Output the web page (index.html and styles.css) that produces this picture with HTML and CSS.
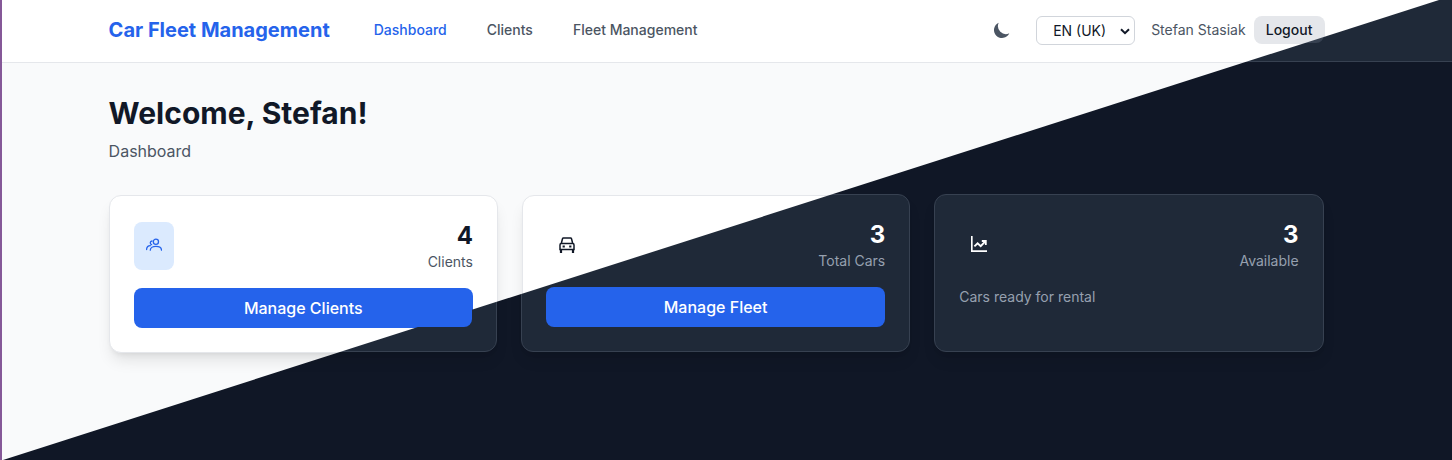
FILE: index.html
```html
<!DOCTYPE html>
<html lang="en">
<head>
<meta charset="utf-8">
<title>Car Fleet Management</title>
<link rel="stylesheet" href="styles.css">
</head>
<body>
<div class="stage">
  <div class="theme light">
    <header class="topbar">
      <div class="container bar">
        <div class="brand">Car Fleet Management</div>
        <nav class="nav">
          <a class="active">Dashboard</a>
          <a>Clients</a>
          <a>Fleet Management</a>
        </nav>
        <div class="tools">
          <svg class="moon" viewBox="0 0 20 20"><path fill="currentColor" d="M17.293 13.293A8 8 0 016.707 2.707a8.001 8.001 0 1010.586 10.586z"/></svg>
          <div class="select"><span>EN (UK)</span><svg class="chevron" viewBox="0 0 10 7"><path d="M1 1.2 5 5.2 9 1.2" fill="none" stroke="currentColor" stroke-width="2"/></svg></div>
          <span class="user">Stefan Stasiak</span>
          <button class="logout">Logout</button>
        </div>
      </div>
    </header>
    <main class="container main">
      <h1>Welcome, Stefan!</h1>
      <p class="subtitle">Dashboard</p>
      <div class="cards">
        <section class="card">
          <div class="row">
            <div class="icon tinted">
              <svg viewBox="0 0 16 16" fill="none" stroke="currentColor" stroke-width="1.3" stroke-linecap="round"><circle cx="9.9" cy="4.8" r="2.6"/><path d="M4.3 13.2c0-5 11.2-5 11.2 0"/><path d="M6 4a1.9 1.9 0 0 0-.4 3.7"/><path d="M.6 12.5c0-2.3 1.4-3.7 3.7-3.9"/></svg>
            </div>
            <div class="stat"><div class="value">4</div><div class="label">Clients</div></div>
          </div>
          <button class="action">Manage Clients</button>
        </section>
        <section class="card">
          <div class="row">
            <div class="icon">
              <svg viewBox="0 0 16 16" fill="none" stroke="currentColor" stroke-width="1.5"><path d="M2.2 6.8 3.5 1.7Q3.7 1 4.4 1h7.2q.7 0 .9.7l1.3 5.1M1 12.4V7.9Q1 6.6 2.2 6.6h11.6Q15 6.6 15 7.9v4.5z"/><path d="M2 12.5V16M14 12.5V16" stroke-width="2.2"/><path d="M3.6 9.5h2.2M10.2 9.5h2.2" stroke-width="2.1"/></svg>
            </div>
          </div>
        </section>
      </div>
    </main>
  </div>

  <div class="theme dark">
    <header class="topbar">
      <div class="container bar">
        <div class="tools"><div class="logout"></div></div>
      </div>
    </header>
    <main class="container main">
      <div class="heading-space"></div>
      <div class="cards">
        <section class="card">
          <div class="row"></div>
          <div class="action"></div>
        </section>
        <section class="card">
          <div class="row end">
            <div class="stat"><div class="value">3</div><div class="label">Total Cars</div></div>
          </div>
          <button class="action">Manage Fleet</button>
        </section>
        <section class="card">
          <div class="row">
            <div class="icon">
              <svg viewBox="0 0 16 16" fill="none" stroke="currentColor" stroke-width="1.7"><path d="M.8 0v15.2H16"/><path d="M3.4 10.4 6.6 7.3l3.1 2.9 4.6-4.8" stroke-width="1.9"/><path d="M10.8 5h4v4" stroke-width="1.8"/></svg>
            </div>
            <div class="stat"><div class="value">3</div><div class="label">Available</div></div>
          </div>
          <p class="note">Cars ready for rental</p>
        </section>
      </div>
    </main>
  </div>
</div>
</body>
</html>
```
FILE: styles.css
```css
* { box-sizing: border-box; margin: 0; }
body { font-family: Inter, "Liberation Sans", sans-serif; font-size: 16px; line-height: 24px; }
button { font: inherit; border: 0; padding: 0; }

.stage { position: relative; width: 1452px; height: 460px; overflow: hidden; background: #855898; }

/* Both themes are stacked and split along the diagonal. */
.theme { position: absolute; inset: 0; }
.light {
  --bar: #fff; --line: #e5e7eb; --text: #111827; --muted: #4b5563; --chip: #e5e7eb;
  background: #f9fafb; color: var(--text);
  left: 2px; padding-left: 106.6px;
}
.dark {
  --bar: #1f2938; --line: #374151; --text: #fff; --muted: #96a0af; --chip: #374151;
  background: #101726; color: var(--text);
  padding-left: 107.6px;
  clip-path: polygon(1439px 0, 1452px 0, 1452px 460px, 3px 460px);
  /* composited as one group so the diagonal edge blends cleanly */
  opacity: .999;
}

.container { width: 1216px; }
.topbar { height: 63px; margin-left: -106.6px; padding-left: 106.6px; background: var(--bar); border-bottom: 1px solid var(--line); }
.dark .topbar { height: 62px; margin-left: -107.6px; padding-left: 107.6px; }
.bar { height: 100%; display: flex; align-items: flex-start; }
.brand { padding-top: 16px; line-height: 28px; font-size: 20px; font-weight: 700; color: #2563eb; }
.nav { display: flex; gap: 40px; margin-left: 44px; padding-top: 20px; font-size: 14px; line-height: 20px; font-weight: 500; color: var(--muted); }
.nav .active { color: #2563eb; }
.tools { display: flex; align-items: center; margin-left: auto; padding-top: 16px; height: 44px; font-size: 14px; line-height: 20px; }
.moon { width: 20px; height: 20px; margin-right: 24px; color: #4b5563; }
.select { display: flex; align-items: center; justify-content: space-between; width: 99px; height: 29px; margin: 1px 16px 0 0; padding: 1px 4px 0 16px; border: 1px solid #d1d5db; border-radius: 6px; background: #fff; color: #111827; }
.chevron { width: 10px; height: 7px; }
.user { color: var(--muted); margin-right: 8px; }
.logout { width: 71px; height: 28px; border-radius: 8px; background: var(--chip); color: #111827; font-weight: 500; }
.dark .logout { margin-top: -2px; }

.main { padding-top: 32px; }
h1 { font-size: 30px; line-height: 36px; font-weight: 700; }
.subtitle { margin: 8px 0 32px; color: var(--muted); }
.heading-space { height: 100px; }

.cards { display: grid; grid-template-columns: repeat(3, 1fr); gap: 24px; }
.card { height: 158px; padding: 24px; background: var(--bar); border: 1px solid var(--line); border-radius: 12px; box-shadow: 0 10px 15px -3px rgba(0, 0, 0, .1), 0 4px 6px -4px rgba(0, 0, 0, .1); }
.row { height: 52px; display: flex; align-items: center; justify-content: space-between; }
.row.end { justify-content: flex-end; }
.icon { width: 40px; height: 48px; padding-bottom: 2px; display: flex; align-items: center; justify-content: center; border-radius: 8px; }
.icon svg { width: 16px; height: 16px; }
.tinted { background: #dbeafe; color: #2563eb; }
.stat { text-align: right; }
.value { font-size: 24px; line-height: 32px; font-weight: 700; }
.label, .note { font-size: 14px; line-height: 20px; color: var(--muted); }
.action { display: block; width: 100%; height: 40px; margin-top: 16px; border-radius: 8px; background: #2563eb; color: #fff; font-weight: 500; }
.note { margin-top: 16px; }
```
